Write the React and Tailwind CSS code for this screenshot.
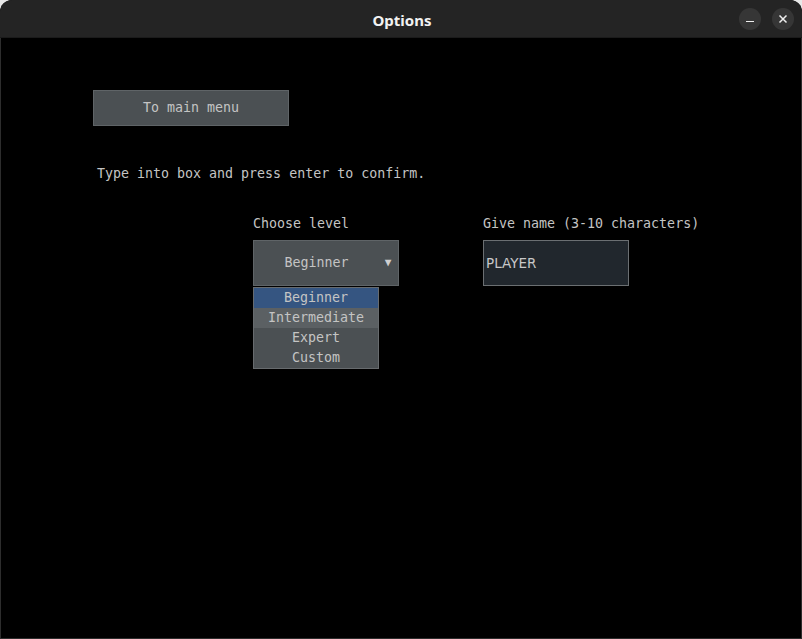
import { useState } from "react";

const mono = { fontFamily: '"DejaVu Sans Mono", "Liberation Mono", monospace' };

const levels = ["Beginner", "Intermediate", "Expert", "Custom"];

export default function App() {
  const [level, setLevel] = useState("Beginner");
  const [name, setName] = useState("PLAYER");

  return (
    <div className="w-[802px] h-[639px] bg-[#e8e8e8] overflow-hidden">
      <div className="w-full h-full flex flex-col rounded-t-[12px] overflow-hidden bg-black">
        {/* title bar */}
        <div className="h-[38px] shrink-0 bg-[#242424] flex items-center relative border-b border-[#1b1b1b]">
          <div
            className="flex-1 text-center text-[15px] font-bold text-[#f2f2f2] pl-[2px] pt-[3px]"
            style={{ fontFamily: '"Noto Sans", "DejaVu Sans", sans-serif' }}
          >
            Options
          </div>
          <div className="absolute right-[8px] top-[8px] flex gap-[11px]">
            <button className="w-[22px] h-[22px] rounded-full bg-[#363636] flex items-center justify-center">
              <span className="block w-[8px] h-[1.5px] bg-[#eeeeee] mt-[5px]" />
            </button>
            <button className="w-[22px] h-[22px] rounded-full bg-[#363636] flex items-center justify-center">
              <svg width="10" height="10" viewBox="0 0 10 10">
                <path d="M1.5 1.5 L8.5 8.5 M8.5 1.5 L1.5 8.5" stroke="#eeeeee" strokeWidth="1.5" />
              </svg>
            </button>
          </div>
        </div>

        {/* content */}
        <div
          className="flex-1 border-x border-b border-[#2d2d2d] pl-[92px] pt-[52px] text-[13.3px] leading-[16px] text-[#c4c4c4]"
          style={mono}
        >
          <button className="w-[196px] h-[36px] bg-[#4b5053] border border-[#5f6467] text-[#c4c4c4] flex items-center justify-center">
            To main menu
          </button>

          <p className="mt-[40px] ml-[4px]">Type into box and press enter to confirm.</p>

          <div className="mt-[34px] ml-[160px] flex gap-[84px]">
            <div className="flex flex-col">
              <span>Choose level</span>
              <div className="relative mt-[8px]">
                <div className="w-[146px] h-[46px] bg-[#4b5053] border border-[#5f6467] flex items-center">
                  <span className="w-[125px] text-center">{level}</span>
                  <span className="flex-1 text-center text-[11px] text-[#d0d0d0] pr-[1px]">▼</span>
                </div>
                <ul className="absolute left-0 top-[47px] w-[126px] bg-[#4b5053] border border-[#676b6e] flex flex-col">
                  {levels.map((l) => (
                    <li
                      key={l}
                      onClick={() => setLevel(l)}
                      className={
                        "h-[20px] flex items-center justify-center " +
                        (l === "Beginner"
                          ? "bg-[#355581]"
                          : l === "Intermediate"
                          ? "bg-[#5b6063]"
                          : "")
                      }
                    >
                      {l}
                    </li>
                  ))}
                </ul>
              </div>
            </div>

            <div className="flex flex-col">
              <span>Give name (3-10 characters)</span>
              <input
                value={name}
                onChange={(e) => setName(e.target.value)}
                className="mt-[8px] w-[146px] h-[46px] bg-[#21272d] border border-[#6b6f72] pl-[2px] text-[13.5px] text-[#c8c8c8] outline-none"
                style={{ fontFamily: '"DejaVu Sans", "Liberation Sans", sans-serif' }}
              />
            </div>
          </div>
        </div>
      </div>
    </div>
  );
}
